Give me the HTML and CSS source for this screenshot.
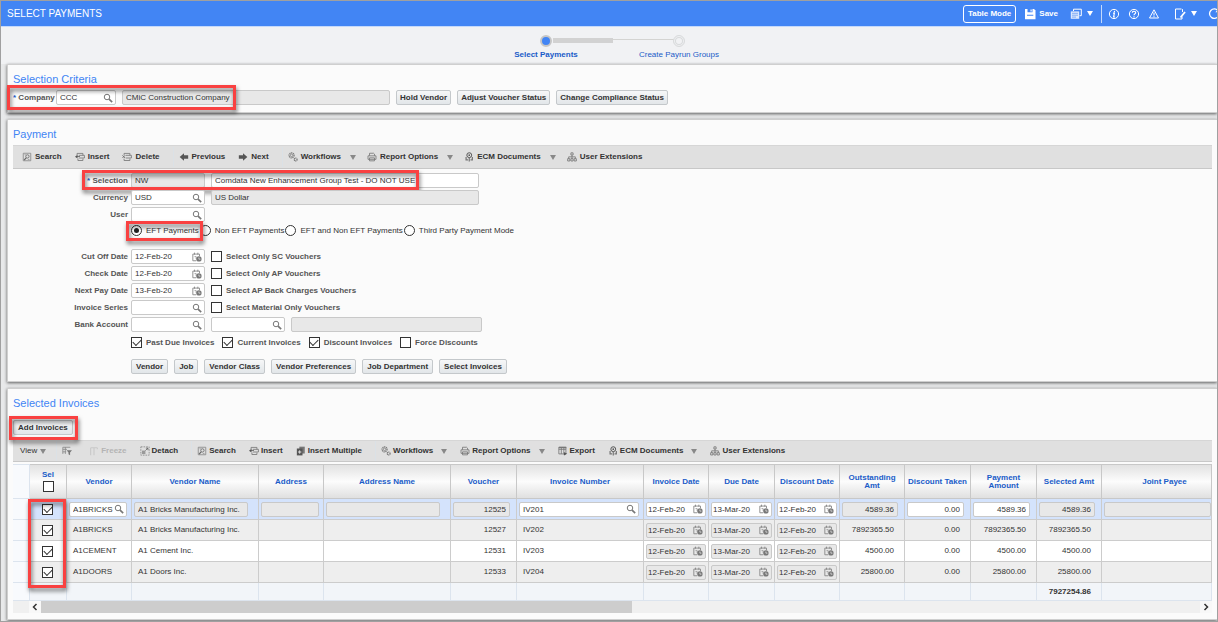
FILE: index.html
```html
<!DOCTYPE html>
<html lang="en">
<head>
	<meta charset="UTF-8">
	<meta name="viewport" content="width=device-width, initial-scale=1.0">
	<title>Select Payments</title>
	<link rel="stylesheet" href="styles.css">
</head>
<body>
	<svg class="sprite" aria-hidden="true">
		<symbol id="i-lens" viewBox="0 0 12 12"><circle cx="4.8" cy="4.8" r="3.3" fill="none" stroke="#777" stroke-width="1.2"/><path d="M7.3 7.3L11 11" stroke="#777" stroke-width="2"/></symbol>
		<symbol id="i-cal" viewBox="0 0 12 12"><path d="M1 2.5h8V5M1 2.5v8h4M3 .8v2.4M7 .8v2.4" fill="none" stroke="#888" stroke-width="1.1"/><path d="M3 5.5h2v3" fill="none" stroke="#999"/><circle cx="8.3" cy="8.3" r="3.2" fill="#777"/><path d="M8.3 6.600v2h1.800" fill="none" stroke="#e8e8e8" stroke-width=".9"/></symbol>
		<symbol id="i-search" viewBox="0 0 12 12"><path d="M1.5 1.5h9v9h-9z" fill="none" stroke="#888"/><circle cx="6.5" cy="5.3" r="2" fill="none" stroke="#666"/><path d="M5 7L2.5 9.7" stroke="#666" stroke-width="1.5"/><path d="M3 3.2h1.5M7 9h2" stroke="#999"/></symbol>
		<symbol id="i-insert" viewBox="0 0 12 12"><path d="M2.5 4V1.7h7V4M4.5 4h6.8v3.2H4.5M3.5 8v2.2h6V8" fill="none" stroke="#777"/><path d="M0 5.6L3 3.4v4.4zM2 5.1h4v1H2z" fill="#555"/></symbol>
		<symbol id="i-delete" viewBox="0 0 12 12"><path d="M2.500 4V1.700h7V4M4.500 4h6.800v3.200H4.500M2.500 8v2.200h7V8" fill="none" stroke="#777"/><path d="M.5 4l3.200 3.200M3.700 4L.5 7.200" stroke="#666"/></symbol>
		<symbol id="i-prev" viewBox="0 0 12 12"><path d="M.8 6L6 1.6V4h5v4H6v2.4z" fill="#555"/></symbol>
		<symbol id="i-next" viewBox="0 0 12 12"><path d="M11.2 6L6 1.6V4H1v4h5v2.4z" fill="#555"/></symbol>
		<symbol id="i-gears" viewBox="0 0 12 12"><circle cx="4.3" cy="4" r="3" fill="none" stroke="#777" stroke-width="1.5" stroke-dasharray="1.5 .7"/><circle cx="4.3" cy="4" r="1.5" fill="none" stroke="#777" stroke-width=".9"/><circle cx="9.2" cy="9" r="1.7" fill="none" stroke="#777" stroke-width="1.5" stroke-dasharray="1.2 .5"/></symbol>
		<symbol id="i-print" viewBox="0 0 12 12"><path d="M3 4.5v-3h5l1 1v2M1.2 4.6h9.600v4.200H1.200zM3 7h6v3.600H3z" fill="none" stroke="#777"/></symbol>
		<symbol id="i-ecm" viewBox="0 0 12 12"><circle cx="6.3" cy="3.8" r="2.9" fill="none" stroke="#555" stroke-width="1.2"/><circle cx="6.3" cy="3.8" r="1" fill="#555"/><path d="M6.3 6.7v4.8M2.5 6v3.5h2.3M10 6v3.5H7.8" fill="none" stroke="#777" stroke-width="1.5"/></symbol>
		<symbol id="i-users" viewBox="0 0 12 12"><path d="M4.7 1h2.6v2.6H4.7zM.8 8h2.6v2.8H.8zM4.7 8h2.6v2.8H4.7zM8.6 8h2.6v2.8H8.6zM6 3.8V8M2 8V5.8h8V8" fill="none" stroke="#777"/></symbol>
		<symbol id="i-qbe" viewBox="0 0 12 12"><path d="M1 9.5v-8h9M1 4h5M4 1.5v8M1 7h4" fill="none" stroke="#888"/><path d="M5.5 5H12L9.7 7.8V11L7.8 9.8v-2z" fill="#777"/></symbol>
		<symbol id="i-freeze" viewBox="0 0 12 12"><path d="M2 2h8M6 2v9M2 2v9M10 2v2" fill="none" stroke="#c8c8c8" stroke-width="1.3"/></symbol>
		<symbol id="i-detach" viewBox="0 0 12 12"><path d="M1 1h10v10H1z" fill="none" stroke="#888" stroke-dasharray="2 1.2"/><path d="M2.3 5.5h4.2v4.2H2.3z" fill="#999"/><path d="M6.5 5.5l3-3M7 2.5h2.5V5" fill="none" stroke="#666"/></symbol>
		<symbol id="i-multi" viewBox="0 0 12 12"><path d="M4 .8h6.5V9H4z" fill="#777"/><path d="M1 3h6.8v8.3H1z" fill="#555"/><path d="M4.4 5.2v4M2.4 7.2h4" stroke="#ddd" stroke-width="1.2"/></symbol>
		<symbol id="i-export" viewBox="0 0 12 12"><path d="M1 1.5h8.5v8H1zM1 4h8.5M4 2v7.5M7 2v5" fill="none" stroke="#777"/><path d="M1 1h9v1.6H1z" fill="#777"/><path d="M6.5 7l4.5 2.4-3.8 2z" fill="#555"/></symbol>
		<symbol id="i-save" viewBox="0 0 12 12"><path d="M1 1h9l1.5 1.5v8.8H1z" fill="#fff"/><path d="M3.5 1h5v3.2h-5zM3 6.8h6.3v1H3z" fill="#4285f4"/><path d="M6.5 1.5h1.2v2H6.5z" fill="#fff"/></symbol>
		<symbol id="i-pages" viewBox="0 0 12 12"><path d="M3.5 3V1.2h7.8v6.5H9.5" fill="none" stroke="#fff"/><path d="M.8 3.4h8.4v7.4H.8z" fill="#dce8fd"/><path d="M2 5.3h6M2 7.2h6M2 9.1h4" stroke="#6b9df5" stroke-width=".8"/></symbol>
		<symbol id="i-info" viewBox="0 0 12 12"><circle cx="6" cy="6" r="4.6" fill="none" stroke="#fff"/><path d="M6.6 2.8l-.3 1.3M5 5.2h1.4L5.6 9H7" fill="none" stroke="#fff" stroke-width="1.2"/></symbol>
		<symbol id="i-help" viewBox="0 0 12 12"><circle cx="6" cy="6" r="4.6" fill="none" stroke="#fff"/><path d="M4.4 4.7c0-2 3.3-1.8 3.3 0C7.7 5.8 6 5.7 6 7.2M6 8.2v1.2" fill="none" stroke="#fff" stroke-width="1.2"/></symbol>
		<symbol id="i-warn" viewBox="0 0 12 12"><path d="M6 1.8L10.500 10H1.500z" fill="none" stroke="#fff"/><path d="M6 4.500v3M6 8.200v1" stroke="#fff" stroke-width="1.100"/></symbol>
		<symbol id="i-edit" viewBox="0 0 12 12"><path d="M7.5 1H1.5v10H6M8.5 1.2V4M8 8.5V11H6" fill="none" stroke="#fff"/><path d="M11 4L6.500 9.500" stroke="#fff" stroke-width="1.800"/></symbol>
		<symbol id="i-refresh" viewBox="0 0 12 12"><path d="M10 2.8A4.7 4.7 0 1 0 10.6 7.5" fill="none" stroke="#fff" stroke-width="1.3"/><path d="M10.8.8v3.4H7.4z" fill="#fff"/></symbol>
	</svg>

	<div class="window">
		<header class="topbar">
			<h1>SELECT PAYMENTS</h1>
			<div class="actions">
				<button type="button" class="mode">Table Mode</button>
				<button type="button" class="act save"><svg class="icon"><use href="#i-save"/></svg>Save</button>
				<button type="button" class="act pages" aria-label="Pages"><svg class="icon"><use href="#i-pages"/></svg><i class="caret"></i></button>
				<span class="divider"></span>
				<button type="button" class="act" aria-label="Info"><svg class="icon"><use href="#i-info"/></svg></button>
				<button type="button" class="act" aria-label="Help"><svg class="icon"><use href="#i-help"/></svg></button>
				<button type="button" class="act" aria-label="Warnings"><svg class="icon"><use href="#i-warn"/></svg></button>
				<button type="button" class="act edit" aria-label="Edit"><svg class="icon"><use href="#i-edit"/></svg><i class="caret"></i></button>
				<button type="button" class="act" aria-label="Refresh"><svg class="icon"><use href="#i-refresh"/></svg></button>
			</div>
		</header>

		<ol class="train">
			<li class="current"><span class="stop"></span><a href="#">Select Payments</a></li>
			<li><span class="stop"></span><a href="#">Create Payrun Groups</a></li>
		</ol>

		<section class="panel">
			<h2>Selection Criteria</h2>
			<div class="row criteria">
				<label for="company"><b class="req">*</b> Company</label>
				<div class="fields">
					<span class="field company"><input id="company" value="CCC"><svg class="icon"><use href="#i-lens"/></svg></span>
					<span class="field wide off"><input value="CMiC Construction Company" aria-label="Company name" readonly></span>
					<button type="button" class="btn">Hold Vendor</button>
					<button type="button" class="btn">Adjust Voucher Status</button>
					<button type="button" class="btn">Change Compliance Status</button>
				</div>
				<span class="callout callout-company"></span>
			</div>
		</section>

		<section class="panel">
			<h2>Payment</h2>
			<div class="toolbar">
				<button type="button" class="tool"><svg class="icon"><use href="#i-search"/></svg>Search</button>
				<button type="button" class="tool"><svg class="icon"><use href="#i-insert"/></svg>Insert</button>
				<button type="button" class="tool"><svg class="icon"><use href="#i-delete"/></svg>Delete</button>
				<span class="split"></span>
				<button type="button" class="tool"><svg class="icon"><use href="#i-prev"/></svg>Previous</button>
				<button type="button" class="tool"><svg class="icon"><use href="#i-next"/></svg>Next</button>
				<span class="split"></span>
				<button type="button" class="tool menu"><svg class="icon"><use href="#i-gears"/></svg>Workflows<i class="caret"></i></button>
				<button type="button" class="tool menu"><svg class="icon"><use href="#i-print"/></svg>Report Options<i class="caret"></i></button>
				<button type="button" class="tool menu"><svg class="icon"><use href="#i-ecm"/></svg>ECM Documents<i class="caret"></i></button>
				<button type="button" class="tool"><svg class="icon"><use href="#i-users"/></svg>User Extensions</button>
			</div>

			<form class="form">
				<div class="row">
					<label for="selection"><b class="req">*</b> Selection</label>
					<div class="fields">
						<span class="field off"><input id="selection" value="NW" readonly></span>
						<span class="field wide"><input value="Comdata New Enhancement Group Test - DO NOT USE" aria-label="Selection name"></span>
					</div>
					<span class="callout callout-selection"></span>
				</div>
				<div class="row">
					<label for="currency">Currency</label>
					<div class="fields">
						<span class="field"><input id="currency" value="USD"><svg class="icon"><use href="#i-lens"/></svg></span>
						<span class="field wide off"><input value="US Dollar" aria-label="Currency name" readonly></span>
					</div>
				</div>
				<div class="row">
					<label for="user">User</label>
					<div class="fields">
						<span class="field"><input id="user"><svg class="icon"><use href="#i-lens"/></svg></span>
					</div>
				</div>
				<div class="row choices radios">
					<label class="choice"><input type="radio" name="mode" checked>EFT Payments</label>
					<label class="choice"><input type="radio" name="mode">Non EFT Payments</label>
					<label class="choice"><input type="radio" name="mode">EFT and Non EFT Payments</label>
					<label class="choice"><input type="radio" name="mode">Third Party Payment Mode</label>
					<span class="callout callout-eft"></span>
				</div>
				<div class="row dates">
					<label for="cutoff">Cut Off Date</label>
					<div class="fields">
						<span class="field"><input id="cutoff" value="12-Feb-20"><svg class="icon"><use href="#i-cal"/></svg></span>
						<label class="choice"><input type="checkbox">Select Only SC Vouchers</label>
					</div>
				</div>
				<div class="row">
					<label for="check">Check Date</label>
					<div class="fields">
						<span class="field"><input id="check" value="12-Feb-20"><svg class="icon"><use href="#i-cal"/></svg></span>
						<label class="choice"><input type="checkbox">Select Only AP Vouchers</label>
					</div>
				</div>
				<div class="row">
					<label for="nextpay">Next Pay Date</label>
					<div class="fields">
						<span class="field"><input id="nextpay" value="13-Feb-20"><svg class="icon"><use href="#i-cal"/></svg></span>
						<label class="choice"><input type="checkbox">Select AP Back Charges Vouchers</label>
					</div>
				</div>
				<div class="row">
					<label for="series">Invoice Series</label>
					<div class="fields">
						<span class="field"><input id="series"><svg class="icon"><use href="#i-lens"/></svg></span>
						<label class="choice"><input type="checkbox">Select Material Only Vouchers</label>
					</div>
				</div>
				<div class="row">
					<label for="bank">Bank Account</label>
					<div class="fields">
						<span class="field"><input id="bank"><svg class="icon"><use href="#i-lens"/></svg></span>
						<span class="field"><input aria-label="Account"><svg class="icon"><use href="#i-lens"/></svg></span>
						<span class="field account off"><input aria-label="Account name" readonly></span>
					</div>
				</div>
				<div class="row choices">
					<label class="choice"><input type="checkbox" checked>Past Due Invoices</label>
					<label class="choice"><input type="checkbox" checked>Current Invoices</label>
					<label class="choice"><input type="checkbox" checked>Discount Invoices</label>
					<label class="choice"><input type="checkbox">Force Discounts</label>
				</div>
				<div class="row buttons">
					<button type="button" class="btn">Vendor</button>
					<button type="button" class="btn">Job</button>
					<button type="button" class="btn">Vendor Class</button>
					<button type="button" class="btn">Vendor Preferences</button>
					<button type="button" class="btn">Job Department</button>
					<button type="button" class="btn">Select Invoices</button>
				</div>
			</form>
		</section>

		<section class="panel">
			<h2>Selected Invoices</h2>
			<div class="row add">
				<button type="button" class="btn">Add Invoices</button>
				<span class="callout callout-add"></span>
			</div>
			<div class="toolbar compact">
				<button type="button" class="tool view">View<i class="caret"></i></button>
				<span class="split"></span>
				<button type="button" class="tool qbe" aria-label="Query by example"><svg class="icon"><use href="#i-qbe"/></svg></button>
				<button type="button" class="tool" disabled><svg class="icon"><use href="#i-freeze"/></svg>Freeze</button>
				<button type="button" class="tool"><svg class="icon"><use href="#i-detach"/></svg>Detach</button>
				<span class="split"></span>
				<button type="button" class="tool"><svg class="icon"><use href="#i-search"/></svg>Search</button>
				<button type="button" class="tool"><svg class="icon"><use href="#i-insert"/></svg>Insert</button>
				<button type="button" class="tool"><svg class="icon"><use href="#i-multi"/></svg>Insert Multiple</button>
				<span class="split"></span>
				<button type="button" class="tool menu"><svg class="icon"><use href="#i-gears"/></svg>Workflows<i class="caret"></i></button>
				<button type="button" class="tool menu"><svg class="icon"><use href="#i-print"/></svg>Report Options<i class="caret"></i></button>
				<button type="button" class="tool"><svg class="icon"><use href="#i-export"/></svg>Export</button>
				<button type="button" class="tool menu"><svg class="icon"><use href="#i-ecm"/></svg>ECM Documents<i class="caret"></i></button>
				<button type="button" class="tool"><svg class="icon"><use href="#i-users"/></svg>User Extensions</button>
			</div>

			<div class="grid">
				<table>
					<colgroup>
						<col class="c-handle"><col class="c-sel"><col class="c-s"><col class="c-l"><col class="c-s"><col class="c-l"><col class="c-m"><col class="c-l">
						<col class="c-s"><col class="c-m"><col class="c-s"><col class="c-s"><col class="c-m"><col class="c-m"><col class="c-s"><col>
					</colgroup>
					<thead>
						<tr>
							<th></th>
							<th><label class="pick">Sel<input type="checkbox"></label></th>
							<th>Vendor</th>
							<th>Vendor Name</th>
							<th>Address</th>
							<th>Address Name</th>
							<th>Voucher</th>
							<th>Invoice Number</th>
							<th>Invoice Date</th>
							<th>Due Date</th>
							<th>Discount Date</th>
							<th>Outstanding<br>Amt</th>
							<th>Discount Taken</th>
							<th>Payment<br>Amount</th>
							<th>Selected Amt</th>
							<th class="joint">Joint Payee</th>
						</tr>
					</thead>
					<tbody>
						<tr class="active">
							<td></td>
							<td class="sel"><input type="checkbox" checked aria-label="Select 12525"></td>
							<td class="ed"><span class="field"><input value="A1BRICKS" aria-label="Vendor"><svg class="icon"><use href="#i-lens"/></svg></span></td>
							<td class="ed name"><span class="field off"><input value="A1 Bricks Manufacturing Inc." aria-label="Vendor name" readonly></span></td>
							<td class="ed"><span class="field off"><input aria-label="Address" readonly></span></td>
							<td class="ed name"><span class="field off"><input aria-label="Address name" readonly></span></td>
							<td class="ed num"><span class="field off"><input value="12525" aria-label="Voucher" readonly></span></td>
							<td class="ed"><span class="field"><input value="IV201" aria-label="Invoice number"><svg class="icon"><use href="#i-lens"/></svg></span></td>
							<td class="ed date"><span class="field"><input value="12-Feb-20" aria-label="Invoice date"><svg class="icon"><use href="#i-cal"/></svg></span></td>
							<td class="ed date"><span class="field"><input value="13-Mar-20" aria-label="Due date"><svg class="icon"><use href="#i-cal"/></svg></span></td>
							<td class="ed date"><span class="field"><input value="12-Feb-20" aria-label="Discount date"><svg class="icon"><use href="#i-cal"/></svg></span></td>
							<td class="ed num"><span class="field off"><input value="4589.36" aria-label="Outstanding amount" readonly></span></td>
							<td class="ed num"><span class="field"><input value="0.00" aria-label="Discount taken"></span></td>
							<td class="ed num"><span class="field"><input value="4589.36" aria-label="Payment amount"></span></td>
							<td class="ed num"><span class="field off"><input value="4589.36" aria-label="Selected amount" readonly></span></td>
							<td class="ed last"><span class="field off"><input aria-label="Joint payee" readonly></span></td>
						</tr>
						<tr class="alt">
							<td></td>
							<td class="sel"><input type="checkbox" checked aria-label="Select 12527"></td>
							<td>A1BRICKS</td>
							<td>A1 Bricks Manufacturing Inc.</td>
							<td></td>
							<td></td>
							<td class="num">12527</td>
							<td>IV202</td>
							<td class="ed date"><span class="field off"><input value="12-Feb-20" aria-label="Invoice date" readonly><svg class="icon"><use href="#i-cal"/></svg></span></td>
							<td class="ed date"><span class="field off"><input value="13-Mar-20" aria-label="Due date" readonly><svg class="icon"><use href="#i-cal"/></svg></span></td>
							<td class="ed date"><span class="field off"><input value="12-Feb-20" aria-label="Discount date" readonly><svg class="icon"><use href="#i-cal"/></svg></span></td>
							<td class="num">7892365.50</td>
							<td class="num">0.00</td>
							<td class="num">7892365.50</td>
							<td class="num">7892365.50</td>
							<td></td>
						</tr>
						<tr>
							<td></td>
							<td class="sel"><input type="checkbox" checked aria-label="Select 12531"></td>
							<td>A1CEMENT</td>
							<td>A1 Cement Inc.</td>
							<td></td>
							<td></td>
							<td class="num">12531</td>
							<td>IV203</td>
							<td class="ed date"><span class="field off"><input value="12-Feb-20" aria-label="Invoice date" readonly><svg class="icon"><use href="#i-cal"/></svg></span></td>
							<td class="ed date"><span class="field off"><input value="13-Mar-20" aria-label="Due date" readonly><svg class="icon"><use href="#i-cal"/></svg></span></td>
							<td class="ed date"><span class="field off"><input value="12-Feb-20" aria-label="Discount date" readonly><svg class="icon"><use href="#i-cal"/></svg></span></td>
							<td class="num">4500.00</td>
							<td class="num">0.00</td>
							<td class="num">4500.00</td>
							<td class="num">4500.00</td>
							<td></td>
						</tr>
						<tr class="alt">
							<td></td>
							<td class="sel"><input type="checkbox" checked aria-label="Select 12533"></td>
							<td>A1DOORS</td>
							<td>A1 Doors Inc.</td>
							<td></td>
							<td></td>
							<td class="num">12533</td>
							<td>IV204</td>
							<td class="ed date"><span class="field off"><input value="12-Feb-20" aria-label="Invoice date" readonly><svg class="icon"><use href="#i-cal"/></svg></span></td>
							<td class="ed date"><span class="field off"><input value="13-Mar-20" aria-label="Due date" readonly><svg class="icon"><use href="#i-cal"/></svg></span></td>
							<td class="ed date"><span class="field off"><input value="12-Feb-20" aria-label="Discount date" readonly><svg class="icon"><use href="#i-cal"/></svg></span></td>
							<td class="num">25800.00</td>
							<td class="num">0.00</td>
							<td class="num">25800.00</td>
							<td class="num">25800.00</td>
							<td></td>
						</tr>
					</tbody>
					<tfoot>
						<tr>
							<td></td><td></td><td></td><td></td><td></td><td></td><td></td><td></td>
							<td></td><td></td><td></td><td></td><td></td><td></td>
							<td class="num">7927254.86</td>
							<td></td>
						</tr>
					</tfoot>
				</table>
				<div class="scroller">
					<button type="button" aria-label="Scroll left"><svg viewBox="0 0 8 8"><path d="M5.5 1L2.5 4l3 3" fill="none" stroke="#333" stroke-width="1.5"/></svg></button>
					<div class="track"><div class="thumb"></div></div>
					<button type="button" aria-label="Scroll right"><svg viewBox="0 0 8 8"><path d="M2.5 1l3 3-3 3" fill="none" stroke="#333" stroke-width="1.5"/></svg></button>
				</div>
				<span class="callout callout-rows"></span>
			</div>
		</section>
	</div>
</body>
</html>
```
FILE: styles.css
```css
* {
	box-sizing: border-box;
}

body {
	margin: 0;
	font-family: "Liberation Sans", Arial, sans-serif;
	font-size: 8px;
	line-height: 10px;
	color: #333;
}

button,
input {
	font: inherit;
	color: inherit;
	margin: 0;
}

.sprite {
	display: none;
}

.icon {
	width: 10px;
	height: 10px;
	flex: none;
}

.caret {
	flex: none;
	border: 3px solid transparent;
	border-top: 5px solid #888;
	border-bottom: 0;
}

.window {
	min-height: 100vh;
	border: 1px solid #a0a0a0;
	background: #e8e9ea;
	overflow: hidden;
}

/* top bar */
.topbar {
	display: flex;
	justify-content: space-between;
	align-items: center;
	height: 26px;
	padding-left: 6px;
	background: #4285f4;
	border-bottom: 1px solid #c4d9fb;
	color: #fff;
}

h1 {
	margin: 0;
	font-size: 10px;
	font-weight: normal;
}

.actions {
	display: flex;
	align-items: center;
	gap: 8px;
	margin-right: -3px;
}

.mode {
	height: 18px;
	padding: 0 4px;
	border: 1px solid #fff;
	border-radius: 3px;
	background: none;
	font-weight: bold;
}

.act {
	display: flex;
	align-items: center;
	gap: 3px;
	padding: 0;
	border: 0;
	background: none;
	font-weight: bold;
}

.act .icon {
	width: 12px;
	height: 12px;
}

.act .caret {
	border-top-color: #fff;
}

.save {
	margin-right: 4px;
}

.pages,
.edit {
	gap: 5px;
}

.edit {
	margin: 0 3px 0 6px;
}

.divider {
	width: 1px;
	height: 18px;
	margin-right: -2px;
	background: #c4d9fb;
}

/* train */
.train {
	display: flex;
	justify-content: center;
	height: 37px;
	margin: 0;
	padding: 8px 0 0 7px;
	list-style: none;
	background: #f1f2f4;
}

.train li {
	position: relative;
	width: 133px;
	display: flex;
	flex-direction: column;
	align-items: center;
	gap: 3px;
}

.train a {
	color: #1a5cc8;
	text-decoration: none;
}

.current a {
	font-weight: bold;
}

.stop {
	width: 12px;
	height: 12px;
	border: 1px solid #d8dadb;
	border-radius: 50%;
	background: #f1f2f4;
	box-shadow: inset 0 0 0 1px #f1f2f4, inset 0 0 0 2px #d8dadb;
}

.current .stop {
	border: 2px solid #c6c6c6;
	background: #4285f4;
	box-shadow: none;
}

.current::before,
.current::after {
	content: "";
	position: absolute;
	background: #d2d2d2;
}

.current::before {
	left: 73px;
	top: 3px;
	width: 60px;
	height: 5px;
}

.current::after {
	left: 133px;
	top: 4px;
	width: 61px;
	height: 1px;
	background: #d4d4d2;
}

/* panels */
.panel {
	margin: 0 0 6px 6px;
	padding: 7px 5px 7px 5px;
	border: 1px solid #cfcfcf;
	border-right: 0;
	background: #fbfbfb;
	box-shadow: 0 1px 3px rgba(0, 0, 0, 0.6);
}

.panel:last-child {
	margin-bottom: 0;
	padding-bottom: 6px;
}

h2 {
	margin: 0 0 4px;
	font-size: 11px;
	line-height: 14px;
	font-weight: normal;
	color: #4285f4;
}

.row {
	position: relative;
	display: flex;
	align-items: center;
	height: 15px;
}

.row > label {
	flex: none;
	font-weight: bold;
	color: #555;
}

.req {
	color: #1a5cc8;
}

.fields {
	display: flex;
	align-items: center;
	gap: 6px;
}

.criteria > label {
	width: 43px;
	white-space: nowrap;
}

.field {
	display: flex;
	align-items: center;
	flex: none;
	width: 74px;
	height: 15px;
	padding-right: 2px;
	border: 1px solid #c9c9c9;
	border-radius: 2px;
	background: #fff;
}

.field input {
	flex: 1;
	width: 0;
	min-width: 0;
	height: 13px;
	padding: 0 3px;
	border: 0;
	outline: 0;
	background: none;
}

.off {
	background: #e8e8e8;
}

.company {
	width: 60px;
}

.wide {
	width: 268px;
}

.account {
	width: 191px;
}

.btn {
	height: 15px;
	padding: 0 4px;
	border: 1px solid #c4c8cb;
	border-radius: 2px;
	background: linear-gradient(#f6f7f8, #e2e6e9);
	font-weight: bold;
	line-height: 12px;
	white-space: nowrap;
}

.criteria .btn {
	padding: 0 3px;
}

/* toolbars */
.toolbar {
	display: flex;
	align-items: center;
	height: 24px;
	padding-left: 9px;
	background: #e0e0e0;
	border-top: 1px solid #d6d6d6;
	border-bottom: 1px solid #c8c8c8;
}

.tool {
	display: flex;
	align-items: center;
	flex: none;
	gap: 3px;
	margin-right: 13px;
	padding: 0;
	border: 0;
	background: none;
	font-weight: bold;
	white-space: nowrap;
}

.tool.menu {
	margin-right: 11px;
}

.tool .caret {
	margin-left: 6px;
}

.tool:disabled {
	color: #b4b4b4;
}

.split {
	width: 1px;
	height: 20px;
	margin-right: 5px;
	background: #dbe1e6;
}

/* payment form */
.form {
	display: flex;
	flex-direction: column;
	gap: 2px;
	padding-top: 4px;
}

.form .row > label:first-child:not(.choice) {
	width: 118px;
	padding-right: 3px;
	text-align: right;
}

.choice {
	display: flex;
	align-items: center;
	gap: 4px;
	font-weight: bold;
	color: #555;
	white-space: nowrap;
}

.choices {
	gap: 8px;
	padding-left: 118px;
	margin-top: 1px;
}

.radios {
	gap: 1px;
	margin-top: -1px;
}

.row.radios > .choice {
	font-weight: normal;
	color: #333;
}

.dates {
	margin-top: 9px;
}

.buttons {
	gap: 6px;
	margin-top: 7px;
	padding-left: 118px;
}

input[type="checkbox"],
input[type="radio"] {
	appearance: none;
	flex: none;
	display: grid;
	place-items: center;
	width: 11px;
	height: 11px;
	border: 1px solid #333;
	background: #fff;
}

input[type="radio"] {
	border-radius: 50%;
}

input[type="radio"]:checked::after {
	content: "";
	width: 5px;
	height: 5px;
	border-radius: 50%;
	background: #222;
}

input[type="checkbox"]:checked::after {
	content: "";
	width: 7px;
	height: 4px;
	margin-bottom: 2px;
	border: solid #333;
	border-width: 0 0 1px 1px;
	transform: rotate(-45deg);
}

/* invoices */
.add {
	margin: 10px 0 5px;
}

.compact {
	height: 22px;
	margin-bottom: 2px;
	padding-left: 7px;
}

.compact .tool {
	gap: 2px;
	margin-right: 13px;
}

.compact .view {
	gap: 0;
	margin-right: 10px;
	font-weight: normal;
}

.view .caret {
	margin-left: 3px;
}

.compact .qbe {
	margin-right: 17px;
}

.grid {
	position: relative;
}

table {
	width: 100%;
	table-layout: fixed;
	border-collapse: separate;
	border-spacing: 0;
}

.c-handle {
	width: 17px;
}

.c-sel {
	width: 37px;
}

.c-s {
	width: 65px;
}

.c-m {
	width: 66px;
}

.c-l {
	width: 127px;
}

th {
	height: 35px;
	padding: 0;
	border-right: 1px solid #c8c8c8;
	border-top: 1px solid #c8c8c8;
	border-bottom: 1px solid #c8c8c8;
	background: linear-gradient(#e2e2e2, #fcfcfc 50%, #e0e0e0);
	color: #1a5cc8;
	line-height: 8px;
}

.joint {
	padding-left: 16px;
}

.pick {
	display: flex;
	flex-direction: column;
	align-items: center;
	gap: 2px;
}

td {
	height: 21px;
	padding: 0 6px;
	border-right: 1px solid #ccc;
	border-bottom: 1px solid #ccc;
	background: #fff;
	white-space: nowrap;
	overflow: hidden;
}

.alt td {
	background: #eee;
}

.active td {
	background: #d4e3fc;
}

tr > :first-child,
.alt td:first-child {
	background: #f8fafd;
	border-color: #dce4ee;
}

td.sel {
	padding: 0 12px;
}

td.num {
	padding-right: 10px;
	text-align: right;
}

td.ed {
	padding: 0 4px 0 2px;
}

td.name {
	padding-right: 10px;
}

td.num.ed {
	padding-right: 6px;
}

td.date {
	padding: 0 2px;
}

td.last {
	padding-right: 0;
}

td .field {
	width: auto;
}

td .field input {
	padding: 0 0 0 3px;
}

td.num input {
	padding: 0 3px 0 0;
	text-align: right;
}

.num .field {
	padding-right: 0;
}

td.date input {
	padding: 0 1px;
}

tfoot td {
	height: 18px;
	background: #f2f5f9;
	border-color: #dce4ee;
	font-weight: bold;
}

.scroller {
	display: flex;
	height: 12px;
	padding-left: 16px;
	background: #f0f0f0;
}

.scroller button {
	display: grid;
	place-items: center;
	width: 12px;
	padding: 0;
	border: 0;
	background: #f8f8f8;
}

.scroller svg {
	width: 8px;
	height: 8px;
}

.track {
	flex: 1;
}

.thumb {
	width: 51%;
	height: 12px;
	background: #cdcdcd;
}

/* red markers drawn over the page */
.callout {
	position: absolute;
	border: 3px solid #f94141;
	filter: drop-shadow(1px 3px 2px rgba(0, 0, 0, 0.55));
	pointer-events: none;
}

.callout-company {
	left: -6px;
	top: -5px;
	width: 229px;
	height: 25px;
}

.callout-selection {
	left: 69px;
	top: -3px;
	width: 337px;
	height: 20px;
}

.callout-eft {
	left: 113px;
	top: -2px;
	width: 77px;
	height: 20px;
}

.callout-add {
	left: -4px;
	top: -4px;
	width: 69px;
	height: 24px;
}

.callout-rows {
	left: 15px;
	top: 35px;
	width: 38px;
	height: 89px;
}
```
